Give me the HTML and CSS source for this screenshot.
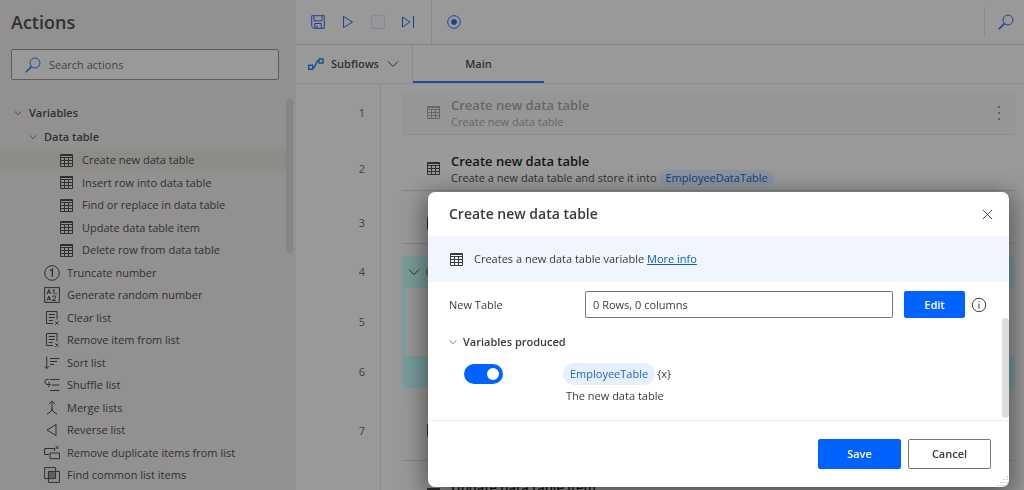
FILE: index.html
```html
<!DOCTYPE html>
<html lang="en">
<head>
<meta charset="utf-8">
<title>Flow designer</title>
<link rel="stylesheet" href="styles.css">
</head>
<body>
<svg class="sprite" aria-hidden="true">
  <symbol id="table" viewBox="0 0 13 13"><path d="M.5 .5h12v12H.5zM.5 3.500h12M.5 6.500h12M.5 9.500h12M4.500 3v9M8.500 3v9"/><path d="M.5 1.500h12" stroke-width="1"/></symbol>
  <symbol id="chevron" viewBox="0 0 12 12"><path d="M1 3.5l5 5 5-5"/></symbol>
  <symbol id="search" viewBox="0 0 16 16"><circle cx="10" cy="6" r="5"/><path d="M6.4 9.6L.7 15.3" stroke-width="1.5"/></symbol>
  <symbol id="number" viewBox="0 0 16 16"><circle cx="8" cy="8" r="7.3"/><path d="M6 5.7L8.4 4.2V12" stroke-width="1.3"/></symbol>
  <symbol id="random" viewBox="0 0 16 16"><path d="M.6 .6h14.8v14.8H.6z"/><path d="M3 7l1.9-4.5L6.8 7M3.7 5.6h2.4M8.500 3.600L10 2.500V7M12 6v1.600M3 13.500L4.900 9l1.900 4.500M3.700 12.100h2.400M8.500 10q.2-1.200 1.600-1.200 1.500 0 1.500 1.200 0 1-3 3.400h3.300"/></symbol>
  <symbol id="clear" viewBox="0 0 16 16"><path d="M9 13.500H2.500V1.500h10.500v8M4.800 4.500h6M4.800 7.500h6M4.800 10.500h4M11.200 11.500l3.300 3.300m0-3.300l-3.300 3.300"/></symbol>
  <symbol id="sort" viewBox="0 0 16 16"><path d="M2.800 1.500v12M.8 11.300l2 2.200 2-2.200M6 3.500h9.500M6 6.500h7M6 9.500h4"/></symbol>
  <symbol id="shuffle" viewBox="0 0 16 16"><path d="M6 2.500h9.500M8 8h7.500M6 13.500h9.500M4.500 2.500H3Q.7 2.700.7 4.700T3 7.500h3M4 5l2.300 2.500L4 10"/></symbol>
  <symbol id="merge" viewBox="0 0 16 16"><path d="M8 1.500V8.500Q7.500 12.500 3 14M8 8.500Q8.500 12.500 13 14M5 4.200l3-3 3 3"/></symbol>
  <symbol id="reverse" viewBox="0 0 16 16"><path d="M12 2.500v11L3 8z"/></symbol>
  <symbol id="duplicate" viewBox="0 0 16 16"><path d="M5 9.500H.6v-6H10.500v2.500M6 8h9.400v5.700H6zM11.500 1l3 3m0-3l-3 3"/></symbol>
  <symbol id="common" viewBox="0 0 16 16"><path d="M.6 .6h11v11h-11zM4.400 4.400h11v11h-11z"/><path d="M5 5h6v6H5z" fill="currentColor" opacity=".5"/></symbol>
  <symbol id="save" viewBox="0 0 14 14"><path d="M.7 .7h12.600v12.600H2.500L.7 11.500zM3 .7v5.200h8V.7M3.800 13v-4.500h6.500V13M6 10.500V13"/></symbol>
  <symbol id="play" viewBox="0 0 14 14"><path d="M2.500 1.500v11L11.500 7z"/></symbol>
  <symbol id="stop" viewBox="0 0 14 14"><path d="M.6 .6h12.800v12.800H.6z"/></symbol>
  <symbol id="step" viewBox="0 0 14 14"><path d="M1.500 2v10l7.500-5zM12.500 1v12"/></symbol>
  <symbol id="record" viewBox="0 0 14 14"><circle cx="7" cy="7" r="6.300"/><circle cx="7" cy="7" r="2.500" fill="currentColor"/></symbol>
  <symbol id="subflow" viewBox="0 0 16 14"><path d="M.7 8.300h4v4h-4zM11 2h4v4h-4zM4.700 10.500h1.500L9.500 4H11" stroke-width="1.400"/></symbol>
  <symbol id="close" viewBox="0 0 12 12"><path d="M1 1l10 10M11 1L1 11"/></symbol>
  <symbol id="info" viewBox="0 0 16 16"><circle cx="8" cy="8" r="6.700"/><path d="M8 6.800v4.700M8 4.300v1.300"/></symbol>
</svg>

<div class="app">
  <aside class="sidebar">
    <h1 class="sidebar-title">Actions</h1>
    <label class="search-box">
      <svg class="icon icon-16 blue"><use href="#search"/></svg>
      <input type="text" class="search-input" placeholder="Search actions" aria-label="Search actions">
    </label>
    <nav class="tree">
      <button class="group"><svg class="icon icon-8"><use href="#chevron"/></svg>Variables</button>
      <button class="group subgroup"><svg class="icon icon-8"><use href="#chevron"/></svg>Data table</button>
      <ul class="actions">
        <li class="action nested selected"><svg class="icon icon-13"><use href="#table"/></svg>Create new data table</li>
        <li class="action nested"><svg class="icon icon-13"><use href="#table"/></svg>Insert row into data table</li>
        <li class="action nested"><svg class="icon icon-13"><use href="#table"/></svg>Find or replace in data table</li>
        <li class="action nested"><svg class="icon icon-13"><use href="#table"/></svg>Update data table item</li>
        <li class="action nested"><svg class="icon icon-13"><use href="#table"/></svg>Delete row from data table</li>
        <li class="action"><svg class="icon icon-16"><use href="#number"/></svg>Truncate number</li>
        <li class="action"><svg class="icon icon-16"><use href="#random"/></svg>Generate random number</li>
        <li class="action"><svg class="icon icon-16"><use href="#clear"/></svg>Clear list</li>
        <li class="action"><svg class="icon icon-16"><use href="#clear"/></svg>Remove item from list</li>
        <li class="action"><svg class="icon icon-16"><use href="#sort"/></svg>Sort list</li>
        <li class="action"><svg class="icon icon-16"><use href="#shuffle"/></svg>Shuffle list</li>
        <li class="action"><svg class="icon icon-16"><use href="#merge"/></svg>Merge lists</li>
        <li class="action"><svg class="icon icon-16"><use href="#reverse"/></svg>Reverse list</li>
        <li class="action"><svg class="icon icon-16"><use href="#duplicate"/></svg>Remove duplicate items from list</li>
        <li class="action"><svg class="icon icon-16"><use href="#common"/></svg>Find common list items</li>
      </ul>
      <span class="tree-scrollbar"></span>
    </nav>
  </aside>

  <main class="designer">
    <div class="toolbar">
      <div class="tools">
        <button class="tool" aria-label="Save"><svg class="icon icon-14"><use href="#save"/></svg></button>
        <button class="tool" aria-label="Run"><svg class="icon icon-14"><use href="#play"/></svg></button>
        <button class="tool faded" aria-label="Stop" disabled><svg class="icon icon-14"><use href="#stop"/></svg></button>
        <button class="tool" aria-label="Run next action"><svg class="icon icon-14"><use href="#step"/></svg></button>
      </div>
      <div class="tools recorder"><button class="tool" aria-label="Recorder"><svg class="icon icon-14"><use href="#record"/></svg></button></div>
      <button class="tool find" aria-label="Search in flow"><svg class="icon icon-16"><use href="#search"/></svg></button>
    </div>
    <div class="tabs">
      <button class="subflows"><svg class="icon icon-16 blue"><use href="#subflow"/></svg>Subflows<svg class="icon icon-12 push"><use href="#chevron"/></svg></button>
      <button class="tab">Main</button>
    </div>
    <ol class="steps">
      <li class="step"><span class="step-number">1</span>
        <div class="card disabled"><svg class="icon icon-13"><use href="#table"/></svg>
          <div class="card-text"><div class="card-title">Create new data table</div><div class="card-note">Create new data table</div></div>
          <button class="more" aria-label="More actions"><i class="dot"></i><i class="dot"></i><i class="dot"></i></button></div></li>
      <li class="step"><span class="step-number">2</span>
        <div class="card"><svg class="icon icon-13"><use href="#table"/></svg>
          <div class="card-text"><div class="card-title">Create new data table</div><div class="card-note">Create a new data table and store it into <span class="variable dim">EmployeeDataTable</span></div></div></div></li>
      <li class="step"><span class="step-number">3</span><div class="card short"><svg class="icon icon-13"><use href="#table"/></svg></div></li>
      <li class="step joined"><span class="step-number">4</span><div class="card block"><svg class="icon icon-12"><use href="#chevron"/></svg><svg class="icon icon-12"><use href="#record"/></svg></div></li>
      <li class="step joined"><span class="step-number">5</span><div class="card block-body"></div></li>
      <li class="step"><span class="step-number">6</span><div class="card block"></div></li>
      <li class="step"><span class="step-number">7</span><div class="card tall"><svg class="icon icon-13"><use href="#table"/></svg></div></li>
      <li class="step"><span class="step-number">8</span>
        <div class="card"><svg class="icon icon-13"><use href="#table"/></svg>
          <div class="card-text"><div class="card-title">Update data table item</div><div class="card-note">Update data table item</div></div></div></li>
    </ol>
  </main>
</div>

<section class="dialog" role="dialog" aria-labelledby="dialog-title">
  <header class="dialog-header">
    <h2 class="dialog-title" id="dialog-title">Create new data table</h2>
    <button class="plain" aria-label="Close"><svg class="icon icon-10"><use href="#close"/></svg></button>
  </header>
  <div class="banner"><svg class="icon icon-13"><use href="#table"/></svg><span>Creates a new data table variable <a class="link" href="#">More info</a></span></div>
  <div class="dialog-body">
    <div class="field">
      <label class="field-label" for="new-table">New Table</label>
      <input type="text" class="field-input" id="new-table" value="0 Rows, 0 columns">
      <button class="button primary edit">Edit</button>
      <svg class="icon icon-16"><use href="#info"/></svg>
    </div>
    <button class="produced"><svg class="icon icon-8"><use href="#chevron"/></svg>Variables produced</button>
    <div class="output">
      <input type="checkbox" class="toggle" checked aria-label="Produce EmployeeTable">
      <div class="output-info">
        <div class="output-name"><span class="variable">EmployeeTable</span><span class="braces">{x}</span></div>
        <div class="output-note">The new data table</div>
      </div>
    </div>
    <span class="dialog-scrollbar"></span>
  </div>
  <footer class="dialog-footer">
    <button class="button primary">Save</button>
    <button class="button">Cancel</button>
  </footer>
  <svg class="grip" viewBox="0 0 12 12"><path d="M10 1v10M7 4v7M4 7v4M1 10v1" stroke-dasharray="1 2"/></svg>
</section>
</body>
</html>
```

FILE: styles.css
```css
* { box-sizing: border-box; }

body {
  margin: 0;
  height: 100vh;
  overflow: hidden;
  background: #999;
  color: #303030;
  font: 11px/16px "Open Sans", "Noto Sans", sans-serif;
}

button, input { font: inherit; color: inherit; }
button { padding: 0; border: 0; background: none; }
h1, h2, ul, ol { margin: 0; padding: 0; }
ul, ol { list-style: none; }

.sprite { position: absolute; width: 0; height: 0; }
.icon { flex: none; display: block; fill: none; stroke: currentColor; }
.icon-8 { width: 8px; height: 8px; }
.icon-10 { width: 11px; height: 11px; }
.icon-12 { width: 12px; height: 12px; }
.icon-13 { width: 13px; height: 13px; }
.icon-14 { width: 14px; height: 14px; }
.icon-16 { width: 16px; height: 16px; }
.blue { color: #1f4c94; }

.app { display: flex; height: 100%; }

/* Actions pane */
.sidebar {
  flex: none;
  width: 296px;
  overflow: hidden;
  background: #929090;
}
.sidebar-title {
  padding: 10px 11px 0;
  font-size: 18px;
  font-weight: 600;
  line-height: 24px;
}
.search-box {
  display: flex;
  align-items: center;
  gap: 8px;
  height: 31px;
  margin: 15px 17px 0 11px;
  padding: 0 13px;
  border: 1px solid #5c5c5c;
  border-radius: 2px;
  background: #999;
}
.search-input {
  flex: 1;
  min-width: 0;
  padding: 0;
  border: 0;
  outline: 0;
  background: none;
}
.search-input::placeholder { color: #444; opacity: 1; }

.tree { position: relative; padding-top: 21px; }
.tree-scrollbar {
  position: absolute;
  top: 19px;
  right: 3px;
  width: 7px;
  height: 154px;
  border-radius: 4px;
  background: #868484;
}
.group {
  display: flex;
  align-items: center;
  gap: 7px;
  height: 24px;
  padding-left: 14px;
  font-weight: 600;
}
.subgroup { padding-left: 29px; }
.action {
  display: flex;
  align-items: center;
  gap: 7px;
  height: 23px;
  margin-right: 10px;
  padding-left: 44px;
}
.action:nth-child(odd) { height: 22px; }
.nested { gap: 9px; padding-left: 60px; }
.selected { background: #8d8c89; }

/* Designer pane */
.designer {
  display: flex;
  flex: 1;
  flex-direction: column;
  min-width: 0;
}
.toolbar {
  display: flex;
  align-items: center;
  height: 45px;
  border-bottom: 1px solid #868686;
  color: #1d4390;
}
.tools {
  display: flex;
  align-items: center;
  gap: 16px;
  height: 100%;
  padding: 0 16px 0 15px;
  border-right: 1px solid #898989;
}
.recorder { border: 0; }
.faded { color: #8488a0; }
.find {
  height: 30px;
  margin-left: auto;
  padding: 0 10px 0 13px;
  border-left: 1px solid #898989;
}

.tabs {
  display: flex;
  height: 39px;
  border-bottom: 1px solid #8f8f8f;
  font-weight: 600;
}
.subflows {
  display: flex;
  align-items: center;
  gap: 7px;
  width: 117px;
  padding: 0 13px 0 12px;
  border-right: 1px solid #898989;
}
.push { margin-left: auto; }
.tab {
  width: 131px;
  height: 38px;
  padding-top: 2px;
  border-bottom: 2px solid #1d4c97;
}

.steps {
  flex: 1;
  min-height: 0;
  overflow: hidden;
  padding: 7px 9px 0 0;
  background: linear-gradient(#8a8a8a, #8a8a8a) 84px 0 / 1px 100% no-repeat;
}
.step {
  display: flex;
  align-items: center;
  margin-bottom: 13px;
}
.joined { margin-bottom: 0; }
.step-number {
  width: 69px;
  margin-right: 37px;
  color: #414141;
  text-align: right;
}
.card {
  display: flex;
  flex: 1;
  align-items: center;
  gap: 11px;
  height: 43px;
  padding: 0 15px 0 25px;
  border-radius: 2px;
  background: #9a9a9a;
  box-shadow: 0 1px 1px #868686;
}
.disabled { background: #969696; color: #676767; box-shadow: 0 1px 1px #8c8c8c; }
.short { height: 40px; }
.tall { height: 59px; }
.block {
  height: 32px;
  padding-left: 6px;
  gap: 6px;
  background: #7a9d9d;
  box-shadow: none;
}
.block-body {
  height: 68px;
  border-left: 4px solid #7fa0a0;
  border-radius: 0;
}
.card-title {
  padding-top: 1px;
  font-size: 13px;
  font-weight: 600;
  line-height: 17px;
}
.card:not(.disabled) .card-title { color: #141414; }
.more {
  display: grid;
  gap: 4px;
  margin-left: auto;
}
.dot {
  width: 2px;
  height: 2px;
  background: #606060;
}
.variable {
  padding: 3px 7px;
  border-radius: 11px;
  background: #e5f0fc;
  color: #2266b8;
}
.dim {
  padding: 0 6px;
  background: #8995a2;
  color: #173e78;
}

/* Dialog */
.dialog {
  position: fixed;
  top: 192px;
  right: 15px;
  left: 428px;
  border-radius: 7px;
  background: #fff;
  box-shadow: 0 6px 24px 4px rgba(0, 0, 0, .45);
  color: #3a3a3a;
}
.dialog-header {
  display: flex;
  align-items: center;
  justify-content: space-between;
  height: 44px;
  padding: 0 16px 0 21px;
}
.dialog-title { font-size: 14px; font-weight: 600; }
.banner {
  display: flex;
  align-items: center;
  gap: 11px;
  height: 46px;
  padding-left: 22px;
  background: #f1f6fe;
}
.link { color: #0b62b5; }
.dialog-body {
  position: relative;
  height: 138px;
  padding: 9px 22px 0 21px;
}
.dialog-scrollbar {
  position: absolute;
  top: 36px;
  right: 0;
  width: 7px;
  height: 100px;
  border-radius: 3px;
  background: #dedede;
}
.field { display: flex; align-items: center; }
.field-label { width: 136px; }
.field-input {
  flex: 1;
  min-width: 0;
  height: 27px;
  margin-right: 11px;
  padding: 0 7px;
  border: 1px solid #777;
  border-radius: 2px;
  background: #fff;
}
.produced {
  display: flex;
  align-items: center;
  gap: 6px;
  height: 16px;
  margin-top: 16px;
  font-weight: 600;
}
.output {
  display: flex;
  align-items: flex-start;
  gap: 60px;
  padding: 14px 0 0 15px;
}
.toggle {
  display: flex;
  align-items: center;
  justify-content: flex-end;
  width: 39px;
  height: 20px;
  margin: 0;
  padding: 0 4px;
  border-radius: 10px;
  background: #0062ff;
  appearance: none;
}
.toggle::before {
  width: 12px;
  height: 12px;
  border-radius: 50%;
  background: #fff;
  content: "";
}
.output-name { display: flex; align-items: center; height: 20px; }
.output-name .variable { line-height: 16px; }
.braces { margin-left: 2px; }
.output-note { padding: 4px 0 0 3px; }

.dialog-footer {
  display: flex;
  justify-content: flex-end;
  gap: 7px;
  padding: 18px 18px 18px 0;
  border-top: 1px solid #eee;
}
.button {
  width: 83px;
  height: 30px;
  border: 1px solid #777;
  border-radius: 2px;
  font-weight: 600;
}
.primary {
  border-color: #0062ff;
  background: #0062ff;
  color: #fff;
}
.edit { width: 61px; height: 27px; margin-right: 6px; }
.grip {
  position: absolute;
  right: 0;
  bottom: 0;
  width: 12px;
  height: 12px;
  fill: none;
  stroke: #999;
}
```
